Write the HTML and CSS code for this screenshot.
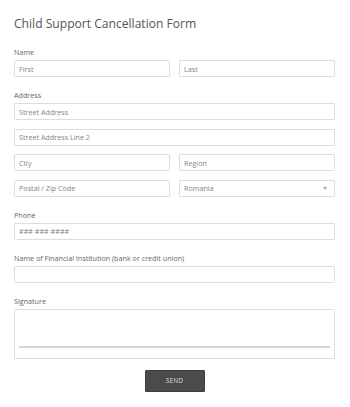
FILE: index.html
```html
<!DOCTYPE html>
<html lang="en">
<head>
    <meta charset="UTF-8">
    <meta name="viewport" content="width=device-width, initial-scale=1.0">
    <title>Child Support Cancellation Form</title>
    <link rel="stylesheet" href="styles.css">
</head>
<body>
<form class="form-container">
    <h1 class="form-title">Child Support Cancellation Form</h1>

    <div class="field">
        <label class="field-label">Name</label>
        <div class="row">
            <input type="text" placeholder="First">
            <input type="text" placeholder="Last">
        </div>
    </div>

    <div class="field">
        <label class="field-label">Address</label>
        <div class="stack">
            <input type="text" placeholder="Street Address">
            <input type="text" placeholder="Street Address Line 2">
            <div class="row">
                <input type="text" placeholder="City">
                <input type="text" placeholder="Region">
            </div>
            <div class="row">
                <input type="text" placeholder="Postal / Zip Code">
                <div class="select">
                    <span>Romania</span>
                    <span class="caret"></span>
                </div>
            </div>
        </div>
    </div>

    <div class="field">
        <label class="field-label">Phone</label>
        <input type="text" placeholder="### ### ####">
    </div>

    <div class="field">
        <label class="field-label">Name of Financial Institution (bank or credit union)</label>
        <input type="text">
    </div>

    <div class="field">
        <label class="field-label">Signature</label>
        <div class="signature">
            <div class="signature-line"></div>
        </div>
    </div>

    <div class="actions">
        <button type="button" class="send">SEND</button>
    </div>
</form>
</body>
</html>
```

FILE: styles.css
```css
:root {
    --color-title: #555555;
    --color-label: #666666;
    --color-placeholder: #858585;
    --color-border: #dddddd;
    --color-button: #4b4b4b;
}

* {
    box-sizing: border-box;
    margin: 0;
    padding: 0;
}

body {
    background: #ffffff;
    font-family: 'Open Sans', 'Noto Sans', sans-serif;
}

.form-container {
    padding: 14px 15px 0 14px;
}

.form-title {
    font-size: 12.1px;
    font-weight: 400;
    line-height: 19px;
    color: var(--color-title);
    margin-bottom: 15px;
}

.field {
    margin-bottom: 14px;
}

.field-label {
    display: block;
    font-size: 7.2px;
    line-height: 9px;
    color: var(--color-label);
    margin-bottom: 3px;
}

.stack {
    display: flex;
    flex-direction: column;
    gap: 8.67px;
}

.row {
    display: flex;
    gap: 9px;
}

.row > * {
    flex: 1;
    min-width: 0;
}

input[type="text"],
.select {
    display: block;
    width: 100%;
    height: 17px;
    padding: 0 4px;
    border: 1px solid var(--color-border);
    border-radius: 1px;
    font-family: inherit;
    font-size: 7.2px;
    color: #444;
    background: #fff;
}

input::placeholder {
    color: var(--color-placeholder);
}

.select {
    display: flex;
    align-items: center;
    justify-content: space-between;
    color: var(--color-placeholder);
}

.caret {
    width: 0;
    height: 0;
    border-left: 2.5px solid transparent;
    border-right: 2.5px solid transparent;
    border-top: 3px solid #aaaaaa;
    margin-right: 3px;
}

.signature {
    height: 50px;
    border: 1px solid var(--color-border);
    border-radius: 1px;
    padding: 36px 4px 0 4px;
}

.signature-line {
    height: 2px;
    background: #d4d4d4;
}

.actions {
    display: flex;
    justify-content: center;
    margin-top: -3px;
}

.send {
    width: 60px;
    height: 22px;
    border: 1px solid #3f3f3f;
    border-radius: 1px;
    background: var(--color-button);
    color: #dddddd;
    font-family: inherit;
    font-size: 6.5px;
    letter-spacing: 0.2px;
}
```
